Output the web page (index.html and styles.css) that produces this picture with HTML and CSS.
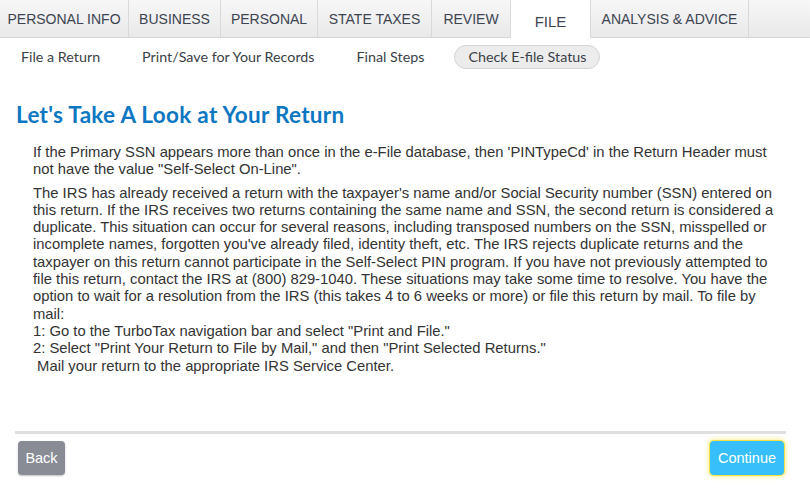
FILE: index.html
```html
<!DOCTYPE html>
<html lang="en">
<head>
    <meta charset="UTF-8">
    <title>File</title>
    <link rel="stylesheet" href="styles.css">
</head>
<body>
    <nav class="tabs">
        <a class="tab t-info">PERSONAL INFO</a>
        <a class="tab t-business">BUSINESS</a>
        <a class="tab t-personal">PERSONAL</a>
        <a class="tab t-state">STATE TAXES</a>
        <a class="tab t-review">REVIEW</a>
        <a class="tab t-file active">FILE</a>
        <a class="tab t-advice">ANALYSIS &amp; ADVICE</a>
        <span class="tab-fill"></span>
    </nav>
    <nav class="subnav">
        <a class="sub s-file">File a Return</a>
        <a class="sub s-print">Print/Save for Your Records</a>
        <a class="sub s-final">Final Steps</a>
        <a class="sub s-check current">Check E-file Status</a>
    </nav>
    <main class="content">
        <h1>Let's Take A Look at Your Return</h1>
        <div class="message">
            <p>If the Primary SSN appears more than once in the e-File database, then 'PINTypeCd' in the Return Header must not have the value "Self-Select On-Line".</p>
            <p>The IRS has already received a return with the taxpayer's name and/or Social Security number (SSN) entered on this return. If the IRS receives two returns containing the same name and SSN, the second return is considered a duplicate. This situation can occur for several reasons, including transposed numbers on the SSN, misspelled or incomplete names, forgotten you've already filed, identity theft, etc. The IRS rejects duplicate returns and the taxpayer on this return cannot participate in the Self-Select PIN program. If you have not previously attempted to file this return, contact the IRS at (800) 829-1040. These situations may take some time to resolve. You have the option to wait for a resolution from the IRS (this takes 4 to 6 weeks or more) or file this return by mail. To file by mail:<br>1: Go to the TurboTax navigation bar and select "Print and File."<br>2: Select "Print Your Return to File by Mail," and then "Print Selected Returns."<br>&nbsp;Mail your return to the appropriate IRS Service Center.</p>
        </div>
    </main>
    <footer class="actions">
        <button class="btn back">Back</button>
        <button class="btn continue">Continue</button>
    </footer>
</body>
</html>
```
FILE: styles.css
```css
* {
    margin: 0;
    padding: 0;
    box-sizing: border-box;
}
body {
    font-family: "Liberation Sans", Arial, sans-serif;
    background-color: #fff;
    color: #333;
    width: 810px;
    height: 496px;
    overflow: hidden;
}
.tabs {
    display: flex;
    height: 38px;
    background: linear-gradient(#f7f7f7, #e9e9e9);
    border-bottom: 1px solid #d6d6d6;
}
.tab {
    display: flex;
    align-items: center;
    justify-content: center;
    height: 37px;
    font-size: 14px;
    color: #3d4450;
    border-right: 1px solid #d9d9d9;
}
.tab.active {
    background: #fff;
    height: 38px;
    padding-top: 4px;
    font-size: 15px;
}
.t-info { width: 129px; }
.t-business { width: 92px; }
.t-personal { width: 97px; }
.t-state { width: 114px; }
.t-review { width: 79px; }
.t-file { width: 80px; }
.t-advice { width: 158px; }
.tab-fill {
    flex: 1;
}
.subnav {
    display: flex;
    align-items: center;
    height: 37px;
    padding-left: 21px;
    font-family: Lato, "Open Sans", sans-serif;
    font-size: 14.3px;
    color: #3a3f47;
}
.sub {
    white-space: nowrap;
}
.s-file { margin-right: 42px; }
.s-print { margin-right: 42px; }
.s-final { margin-right: 30px; }
.current {
    background: #ececec;
    border: 1px solid #d4d4d4;
    border-radius: 12px;
    padding: 2px 13px 3px;
}
.content {
    padding: 25px 16px 0;
    height: 356px;
}
h1 {
    font-family: Lato, "Open Sans", sans-serif;
    font-weight: bold;
    font-size: 22.5px;
    color: #0d77c2;
    letter-spacing: 0.3px;
    margin-top: 1px;
    margin-bottom: 16px;
}
.message {
    padding: 0 8px 0 17px;
    font-size: 14.8px;
    line-height: 17.3px;
    color: #333;
}
.message p {
    margin-bottom: 6px;
}
.actions {
    display: flex;
    justify-content: space-between;
    align-items: flex-start;
    margin: 0 24px 0 15px;
    padding: 7px 2px 0 3px;
    border-top: 3px solid #dfdfdf;
}
.btn {
    font-family: "Liberation Sans", Arial, sans-serif;
    font-size: 14.5px;
    color: #fff;
    border: none;
    border-radius: 4px;
    height: 34px;
    cursor: pointer;
}
.back {
    width: 47px;
    background-color: #898c95;
    box-shadow: 0 1px 2px rgba(0, 0, 0, 0.25);
}
.continue {
    width: 74px;
    background-color: #36bffa;
    box-shadow: 0 0 0 1px #f2e24a, 0 0 4px 2px rgba(250, 230, 80, 0.6);
}
```
